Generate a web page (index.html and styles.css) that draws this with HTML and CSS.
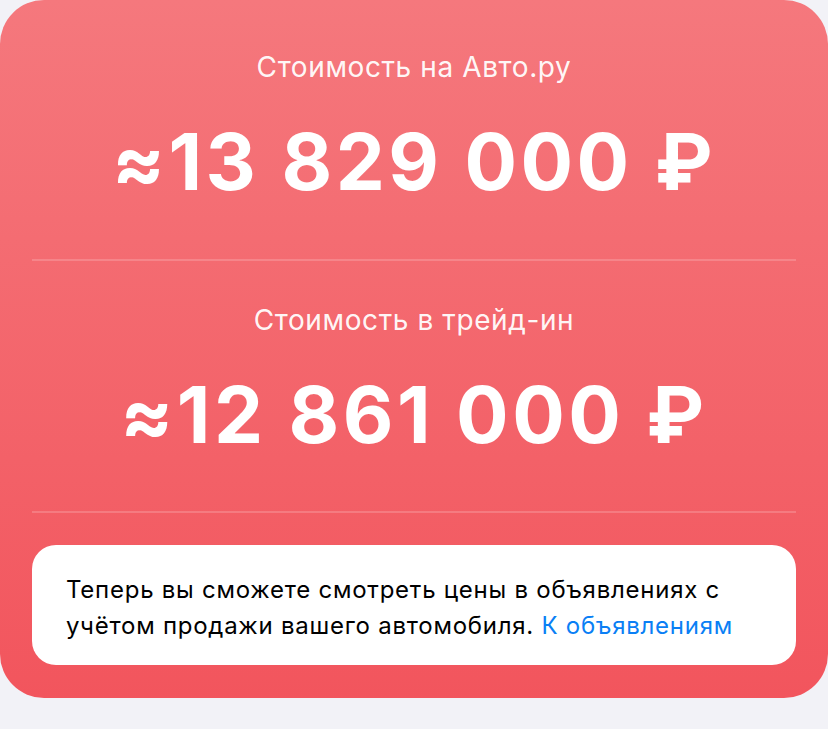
FILE: index.html
```html
<!DOCTYPE html>
<html lang="ru">
<head>
<meta charset="utf-8">
<link rel="stylesheet" href="styles.css">
</head>
<body>
<div class="card">
  <section class="block">
    <div class="label">Стоимость на Авто.ру</div>
    <div class="price">≈13 829 000 ₽</div>
  </section>
  <div class="divider"></div>
  <section class="block">
    <div class="label">Стоимость в трейд-ин</div>
    <div class="price">≈12 861 000 ₽</div>
  </section>
  <div class="divider divider-last"></div>
  <div class="note">Теперь вы сможете смотреть цены в объявлениях с учётом продажи вашего автомобиля. <a class="link" href="#">К объявлениям</a></div>
</div>
</body>
</html>
```
FILE: styles.css
```css
html, body {
  margin: 0;
  padding: 0;
  background: #f2f2f7;
  font-family: Inter, "Noto Sans", sans-serif;
}
.card {
  width: 828px;
  box-sizing: border-box;
  background: linear-gradient(180deg, #f5787d 0%, #f2555d 100%);
  border-radius: 44px;
  padding: 50px 32px 33px;
}
.block {
  display: flex;
  flex-direction: column;
  align-items: center;
  color: #fff;
}
.label {
  font-size: 28px;
  line-height: 34px;
  letter-spacing: 0.6px;
  color: rgba(255,255,255,0.96);
}
.price {
  font-size: 78px;
  font-weight: 700;
  line-height: 92px;
  margin-top: 32px;
  letter-spacing: 3.5px;
}
.divider {
  height: 2px;
  background: rgba(255,255,255,0.18);
  margin: 51px 0 42px;
}
.divider-last {
  margin: 50px 0 32px;
}
.note {
  background: #fff;
  border-radius: 24px;
  padding: 27px 34px 21px;
  font-size: 24px;
  line-height: 36px;
  letter-spacing: 0.75px;
  color: #000;
}
.link {
  color: #0a7ff5;
  text-decoration: none;
}
```
